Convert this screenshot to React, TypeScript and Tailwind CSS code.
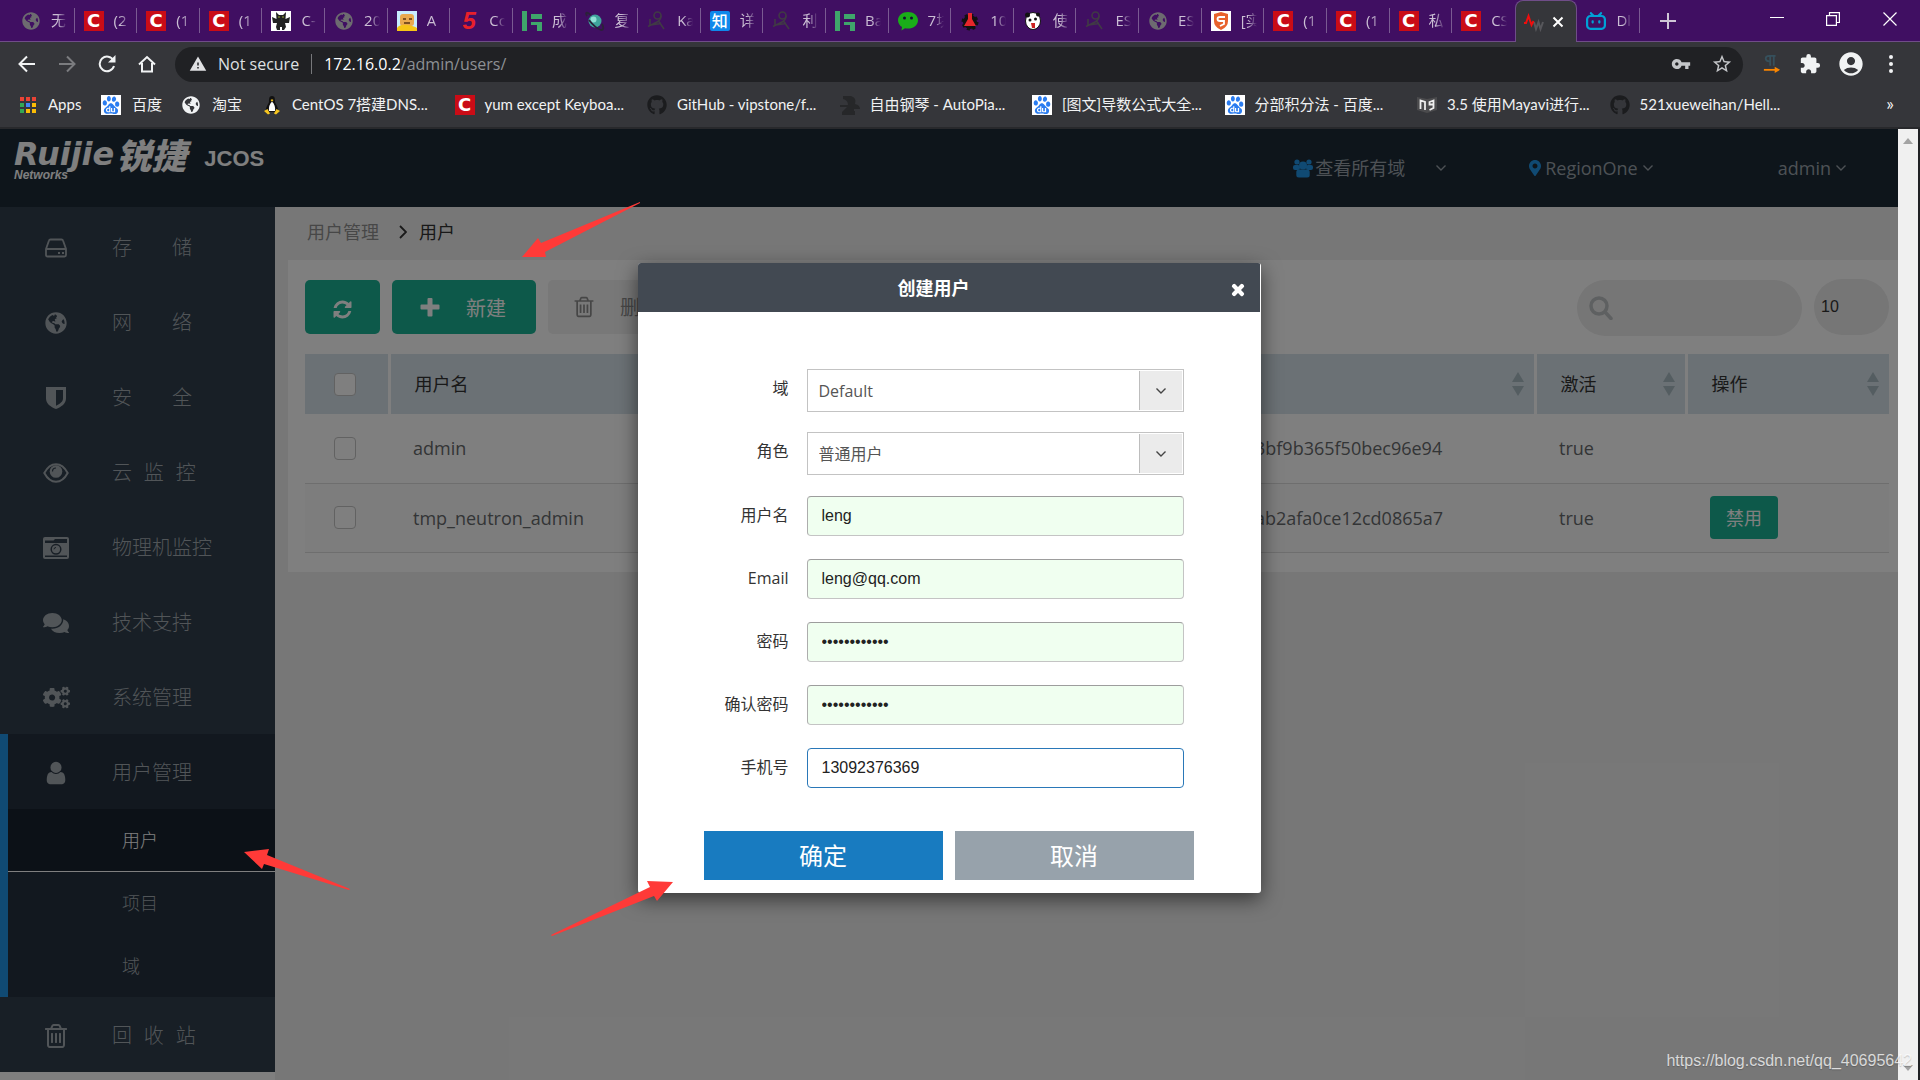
import type { ReactNode } from "react";
import { FaCogs, FaComments, FaGithub, FaGlobeAmericas, FaMapMarkerAlt, FaTimes } from "react-icons/fa";
import { MdAccountCircle, MdExtension, MdStarBorder, MdVpnKey, MdWarning } from "react-icons/md";
import { SiBaidu, SiBilibili } from "react-icons/si";

/* ---------- icons ---------- */

function Chevron({ className }: { className?: string }) {
  return (
    <svg viewBox="0 0 12 8" className={className} fill="none" stroke="currentColor" strokeWidth="1.4">
      <path d="M1.5 1.5 6 6l4.5-4.5" />
    </svg>
  );
}

function FaIcon({ d, className }: { d: string; className?: string }) {
  return (
    <svg viewBox="0 0 1792 1792" className={className} fill="currentColor">
      <path d={d} />
    </svg>
  );
}

const USER =
  "M1536 1399q0 109-62.5 187t-150.5 78h-854q-88 0-150.5-78t-62.5-187q0-85 8.5-160.5t31.5-152 58.5-131 94-89 134.5-34.5q131 128 313 128t313-128q76 0 134.5 34.5t94 89 58.5 131 31.5 152 8.5 160.5zm-256-887q0 159-112.5 271.5t-271.5 112.5-271.5-112.5-112.5-271.5 112.5-271.5 271.5-112.5 271.5 112.5 112.5 271.5z";
const TRASH =
  "M704 736v576q0 14-9 23t-23 9h-64q-14 0-23-9t-9-23v-576q0-14 9-23t23-9h64q14 0 23 9t9 23zm256 0v576q0 14-9 23t-23 9h-64q-14 0-23-9t-9-23v-576q0-14 9-23t23-9h64q14 0 23 9t9 23zm256 0v576q0 14-9 23t-23 9h-64q-14 0-23-9t-9-23v-576q0-14 9-23t23-9h64q14 0 23 9t9 23zm128 724v-948h-896v948q0 22 7 40.5t14.5 27 10.5 8.5h832q3 0 10.5-8.5t14.5-27 7-40.5zm-672-1076h448l-48-117q-7-9-17-11h-317q-10 2-17 11zm928 32v64q0 14-9 23t-23 9h-96v948q0 83-47 143.5t-113 60.5h-832q-66 0-113-58.5t-47-141.5v-952h-96q-14 0-23-9t-9-23v-64q0-14 9-23t23-9h309l70-167q15-37 54-63t79-26h320q40 0 79 26t54 63l70 167h309q14 0 23 9t9 23z";
const REFRESH =
  "M1639 1056q0 5-1 7-64 268-268 434.5t-478 166.5q-146 0-282.5-55t-243.5-157l-129 129q-19 19-45 19t-45-19-19-45v-448q0-26 19-45t45-19h448q26 0 45 19t19 45-19 45l-137 137q71 66 161 102t187 36q134 0 250-65t186-179q11-17 53-117 8-23 30-23h192q13 0 22.5 9.5t9.5 22.5zm25-800v448q0 26-19 45t-45 19h-448q-26 0-45-19t-19-45 19-45l138-138q-148-137-349-137-134 0-250 65t-186 179q-11 17-53 117-8 23-30 23h-199q-13 0-22.5-9.5t-9.5-22.5v-7q65-268 270-434.5t480-166.5q146 0 284 55.5t245 156.5l130-129q19-19 45-19t45 19 19 45z";

function PlusIcon() {
  return (
    <svg viewBox="0 0 20 20" className="size-5" fill="currentColor">
      <path d="M8.500 1H11.500Q12.500 1 12.500 2V7.500H18.500Q19.500 7.500 19.500 8.500V11.500Q19.500 12.500 18.500 12.500H12.500V18.500Q12.500 19.500 11.500 19.500H8.500Q7.500 19.500 7.500 18.500V12.500H1.500Q.5 12.500.5 11.500V8.500Q.5 7.500 1.500 7.500H7.500V2Q7.500 1 8.500 1Z" />
    </svg>
  );
}

function DiskIcon() {
  return (
    <svg viewBox="0 0 24 20" className="w-6" fill="none" stroke="currentColor" strokeWidth="1.8">
      <path d="M2 11 5 2.5Q5.300 1.500 6.500 1.500H17.500Q18.700 1.500 19 2.500L22 11V17Q22 18.500 20.500 18.500H3.500Q2 18.500 2 17ZM2 11H22" />
      <path d="M14 15h2M18 15h2" strokeWidth="2" />
    </svg>
  );
}

function ShieldIcon() {
  return (
    <svg viewBox="0 0 20 22" className="w-5" fill="currentColor">
      <path fillRule="evenodd" d="M0 0H20V11.500C20 16.500 15.500 20 10 22 4.500 20 0 16.500 0 11.500ZM10 3V18.700C14 17 17 14.500 17 11.500V3Z" />
    </svg>
  );
}

function EyeIcon() {
  return (
    <svg viewBox="0 0 26 20" className="w-[26px]">
      <path d="M1.300 10C4 5 8.300 1.300 13 1.300S22 5 24.700 10C22 15 17.700 18.700 13 18.700S4 15 1.300 10Z" fill="none" stroke="currentColor" strokeWidth="2" />
      <circle cx="13" cy="8.500" r="6.300" fill="currentColor" />
      <path d="M9.500 8.500Q9.500 5 13 5" fill="none" stroke="#303e4c" strokeWidth="1.200" />
    </svg>
  );
}

function CameraIcon() {
  return (
    <svg viewBox="0 0 26 22" className="w-[26px]">
      <path fill="currentColor" fillRule="evenodd" d="M2 0H24Q26 0 26 2V20Q26 22 24 22H2Q0 22 0 20V2Q0 0 2 0ZM2 3.500V6H24V2H12L10.500 3.500ZM2 18.500V20H24V18.500Z" />
      <circle cx="13" cy="12.300" r="4.800" fill="none" stroke="#303e4c" strokeWidth="1.500" />
      <path d="M11 12.300Q11 10.500 13 10.500" fill="none" stroke="#303e4c" />
    </svg>
  );
}

function UsersIcon() {
  return (
    <svg viewBox="0 0 20 19" className="w-5" fill="currentColor">
      <circle cx="4" cy="3" r="2.600" />
      <circle cx="16" cy="3" r="2.600" />
      <rect x="0" y="6" width="7" height="5" rx="2" />
      <rect x="13" y="6" width="7" height="5" rx="2" />
      <circle cx="10" cy="6.500" r="4" />
      <rect x="3.300" y="10.500" width="13.400" height="8" rx="2.500" />
    </svg>
  );
}

/* ---------- favicons ---------- */

function Csdn() {
  return (
    <span className="flex size-5 shrink-0 items-center justify-center bg-[#ca0c16] font-['DejaVu_Sans',sans-serif] text-lg leading-5 font-bold text-white">
      C
    </span>
  );
}

function Globe({ className = "text-[#6d6b70]" }: { className?: string }) {
  return <FaGlobeAmericas className={`size-[18px] shrink-0 ${className}`} />;
}

function Baidu() {
  return (
    <span className="flex size-5 shrink-0 items-center justify-center bg-white text-[#2a7cf0]">
      <SiBaidu className="size-[18px]" />
    </span>
  );
}

function Walker() {
  return (
    <svg viewBox="0 0 20 20" className="size-5 shrink-0" fill="none" stroke="#403a45" strokeWidth="1.600">
      <circle cx="10.500" cy="4.500" r="3.500" />
      <path d="M14 4.500Q14 9 10 11L1 15.500M11.500 10 17 18M3 8V14L14 12.500" />
    </svg>
  );
}

function Bars() {
  return (
    <svg viewBox="0 0 20 20" className="size-5 shrink-0" fill="#3fa66b">
      <path d="M0 0H5V20H0ZM9 3H20V8H9ZM9 11H20V20H15V14H9Z" />
    </svg>
  );
}

function Cat() {
  return (
    <svg viewBox="0 0 20 20" className="size-5 shrink-0">
      <rect width="20" height="20" fill="#fff" />
      <path d="M5 1 8 4H12L15 1 14.500 8 19 6 18 12H14L15 16 13 19H11V16H9V19H6L5 16 6 12H2L1 6 5.500 8Z" fill="#222" />
      <path d="M7 6H9M11 6H13" stroke="#9a3" />
    </svg>
  );
}

function Robot() {
  return (
    <svg viewBox="0 0 20 20" className="size-5 shrink-0">
      <rect width="20" height="20" fill="#c8ecff" />
      <rect x="3" y="3" width="14" height="12" rx="3" fill="#e9a94f" />
      <path d="M0 20V17Q3 13 10 14T20 17V20Z" fill="#f6c516" />
      <path d="M6 8H9M12 8H15M7 12H13" stroke="#5a3510" strokeWidth="1.500" />
    </svg>
  );
}

function Planet() {
  return (
    <svg viewBox="0 0 20 20" className="size-5 shrink-0">
      <circle cx="10" cy="10" r="6.500" fill="#3fa49c" />
      <circle cx="8.500" cy="8.500" r="3" fill="#8ee0d4" />
      <path d="M6 4Q-1-1 2 5M4 9Q10 17 16 19 20 19 17 13" fill="none" stroke="#2a2238" strokeWidth="1.800" />
    </svg>
  );
}

function Wechat() {
  return (
    <svg viewBox="0 0 20 20" className="size-5 shrink-0">
      <path d="M10 1C4.500 1 0 4.500 0 9.300 0 12 1.500 14.500 4 16L3.500 19.500 7 17.300C14 18.700 20 15 20 9.300 20 4.500 15.500 1 10 1Z" fill="#1aad19" />
      <circle cx="6.500" cy="7" r="1.500" fill="#113" />
      <circle cx="13.500" cy="7" r="1.500" fill="#113" />
    </svg>
  );
}

function Gear() {
  return (
    <svg viewBox="0 0 20 20" className="size-5 shrink-0">
      <circle cx="10" cy="11" r="7" fill="#111" stroke="#111" strokeWidth="3" strokeDasharray="3 2.500" />
      <path d="M8 2H12V8L16 15H4L8 8Z" fill="#e5262b" />
    </svg>
  );
}

function Panda() {
  return (
    <svg viewBox="0 0 20 20" className="size-5 shrink-0">
      <ellipse cx="10" cy="10" rx="7.500" ry="8.500" fill="#fff" stroke="#111" />
      <circle cx="4.500" cy="4" r="2.500" fill="#111" />
      <circle cx="15" cy="3.500" r="2" fill="#111" />
      <circle cx="7" cy="9" r="1.500" fill="#111" />
      <circle cx="12.500" cy="8" r="1.500" fill="#111" />
      <path d="M8 12H12V17H9Z" fill="#c22" />
    </svg>
  );
}

function Guard() {
  return (
    <svg viewBox="0 0 20 20" className="size-5 shrink-0">
      <rect width="20" height="20" fill="#fff" />
      <path d="M3 3 10 1 17 3V10Q17 16 10 19 3 16 3 10Z" fill="#e8622c" />
      <path d="M14 6H9Q6.500 6 6.500 8T9 10H13V13L9 15" fill="none" stroke="#fff" strokeWidth="1.800" />
    </svg>
  );
}

function Pulse() {
  return (
    <svg viewBox="0 0 20 20" className="size-5 shrink-0" fill="none" strokeWidth="2">
      <path d="M10 10 12 17 14.500 10 16.500 17 19 10" stroke="#57575b" />
      <path d="M0 11H2L4.500 4 7.500 13 9.500 9" stroke="#f00d0d" />
    </svg>
  );
}

function Tux() {
  return (
    <svg viewBox="0 0 20 20" className="size-5 shrink-0">
      <path d="M10 1C7 1 7 4 7 6.500S3 12 4 17H16C17 12 13 9 13 6.500S13 1 10 1Z" fill="#111" />
      <path d="M10 6.500C7.500 9 6.500 12 7 16H13C13.500 12 12.500 9 10 6.500Z" fill="#fff" />
      <path d="M8.500 5 10 4.300 11.500 5 10 6.800ZM2 16 5.500 14 8 18.500 6 19.500ZM18 16 14.500 14 12 18.500 14 19.500Z" fill="#f7c51e" />
    </svg>
  );
}

function Piano() {
  return (
    <svg viewBox="0 0 20 20" className="size-5 shrink-0" fill="#262729">
      <path d="M3 1H11Q17 3 15 9 20 10 20 14H14V16H15V20H2V17L7 12H0V10H8Q8 5 3 4Z" />
    </svg>
  );
}

function Book() {
  return (
    <svg viewBox="0 0 20 20" className="size-5 shrink-0">
      <path d="M0 2 10 4 20 2V15L10 18 0 15Z" fill="#4b4b4d" />
      <path d="M3.500 14V5.500L8 7V15M16.500 9.500H12.500V7L16.500 5.500V13L12.500 15" fill="none" stroke="#eee" strokeWidth="1.800" />
    </svg>
  );
}

function Five() {
  return (
    <span className="w-5 shrink-0 text-center font-['Liberation_Sans',sans-serif] text-2xl leading-5 font-bold text-[#e8202a] italic">
      5
    </span>
  );
}

function Zhihu() {
  return (
    <span className="flex size-5 shrink-0 items-center justify-center rounded-xs bg-[#0f88eb] text-base leading-5 font-medium text-white">
      知
    </span>
  );
}

/* ---------- browser chrome ---------- */

const tabs: { icon: ReactNode; title: string; active?: boolean }[] = [
  { icon: <Globe />, title: "无" },
  { icon: <Csdn />, title: "(2" },
  { icon: <Csdn />, title: "(1" },
  { icon: <Csdn />, title: "(1" },
  { icon: <Cat />, title: "C-" },
  { icon: <Globe />, title: "20" },
  { icon: <Robot />, title: "A" },
  { icon: <Five />, title: "Co" },
  { icon: <Bars />, title: "成" },
  { icon: <Planet />, title: "复" },
  { icon: <Walker />, title: "Ka" },
  { icon: <Zhihu />, title: "详" },
  { icon: <Walker />, title: "利" },
  { icon: <Bars />, title: "Ba" },
  { icon: <Wechat />, title: "7块" },
  { icon: <Gear />, title: "10" },
  { icon: <Panda />, title: "使" },
  { icon: <Walker />, title: "ES" },
  { icon: <Globe />, title: "ES" },
  { icon: <Guard />, title: "[实" },
  { icon: <Csdn />, title: "(1" },
  { icon: <Csdn />, title: "(1" },
  { icon: <Csdn />, title: "私" },
  { icon: <Csdn />, title: "CS" },
  { icon: <Pulse />, title: "", active: true },
  { icon: <SiBilibili className="size-5 shrink-0 text-[#00a1d6]" />, title: "Dl" },
];

function TabStrip() {
  return (
    <div className="flex h-[42px] shrink-0 border-b border-[#6f4d88] bg-[#400f62] pl-3">
      <div className="grid min-w-0 flex-1 auto-cols-fr grid-flow-col">
        {tabs.map((tab, i) =>
          tab.active ? (
            <div key={i} className="-mb-px flex items-center gap-2 rounded-t-lg border border-b-0 border-[#6f4d88] bg-[#35363a] pl-2">
              {tab.icon}
              <button type="button" aria-label="Close tab" className="text-white">
                <svg viewBox="0 0 12 12" className="size-3" stroke="currentColor" strokeWidth="2">
                  <path d="M1.500 1.500 10.500 10.500M10.500 1.500 1.500 10.500" />
                </svg>
              </button>
            </div>
          ) : (
            <div key={i} className="flex min-w-0 items-center">
              <div className="flex min-w-0 flex-1 items-center gap-2.5 pl-[9px]">
                <span className="flex w-5 shrink-0 justify-center">{tab.icon}</span>
                <span className="w-4 overflow-hidden mask-r-from-40% text-[15px] whitespace-nowrap text-[#cbbfd4]">
                  {tab.title}
                </span>
              </div>
              {tabs[i + 1]?.active ? null : <span className="h-[25px] w-px bg-[#7a5a92]" />}
            </div>
          ),
        )}
      </div>
      <div className="flex w-[280px] shrink-0 items-center text-white">
        <button type="button" aria-label="New tab" className="ml-5 text-[#cfc6d6]">
          <svg viewBox="0 0 16 16" className="size-4" stroke="currentColor" strokeWidth="2">
            <path d="M8 0V16M0 8H16" />
          </svg>
        </button>
        <button type="button" aria-label="Minimize" className="mb-2 ml-[94px]">
          <svg viewBox="0 0 14 14" className="size-3.5" stroke="currentColor">
            <path d="M0 7.500H14" />
          </svg>
        </button>
        <button type="button" aria-label="Restore" className="mb-1 ml-[42px]">
          <svg viewBox="0 0 14 14" className="size-3.5" fill="none" stroke="currentColor" strokeWidth="1.200">
            <path d="M.6 3.600H10.400V13.400H.6ZM3.500 3.500V.6H13.400V10.500H10.500" />
          </svg>
        </button>
        <button type="button" aria-label="Close" className="mb-1 ml-[43px]">
          <svg viewBox="0 0 14 14" className="size-3.5" stroke="currentColor" strokeWidth="1.200">
            <path d="M.5.5 13.500 13.500M13.500.5.5 13.500" />
          </svg>
        </button>
      </div>
    </div>
  );
}

function AddressBar() {
  return (
    <div className="flex h-11 shrink-0 items-center text-[#f1f3f4]">
      <button type="button" aria-label="Back" className="ml-[18px]">
        <svg viewBox="0 0 18 18" className="size-[18px]" fill="none" stroke="currentColor" strokeWidth="2">
          <path d="M17 9H2M9 1.500 1.500 9 9 16.500" />
        </svg>
      </button>
      <button type="button" aria-label="Forward" className="ml-[22px] text-[#7b7c7f]">
        <svg viewBox="0 0 18 18" className="size-[18px]" fill="none" stroke="currentColor" strokeWidth="2">
          <path d="M1 9H16M9 1.500 16.500 9 9 16.500" />
        </svg>
      </button>
      <button type="button" aria-label="Reload" className="ml-[22px]">
        <svg viewBox="0 0 18 18" className="size-[18px]" fill="none" stroke="currentColor" strokeWidth="2">
          <path d="M15.500 5.500A7.300 7.300 0 1 0 16 11" />
          <path d="M17.500 0V7.500H10Z" fill="currentColor" stroke="none" />
        </svg>
      </button>
      <button type="button" aria-label="Home" className="ml-[22px]">
        <svg viewBox="0 0 18 18" className="size-[18px]" fill="none" stroke="currentColor" strokeWidth="2">
          <path d="M1 9.500 9 2 17 9.500M4 8V16.500H14V8" />
        </svg>
      </button>
      <div className="ml-[19px] flex h-[35px] min-w-0 flex-1 items-center rounded-full bg-[#202124] pr-2.5 pl-3.5 text-base">
        <MdWarning className="size-[18px] text-[#e0e1e3]" />
        <span className="ml-[11px] text-[#dfe0e2]">Not secure</span>
        <span className="mx-3 h-5 w-px bg-[#77787b]" />
        <span className="text-white">172.16.0.2</span>
        <span className="text-[#8d9094]">/admin/users/</span>
        <MdVpnKey className="ml-auto size-5 text-[#c4c6c9]" />
        <MdStarBorder className="ml-5 size-[22px] text-[#c4c6c9]" />
      </div>
      <svg viewBox="0 0 18 20" className="ml-5 size-[18px]" fill="none">
        <path d="M7 1V12M11 1V12M13 1H6Q2 1 2 4T6 7" stroke="#36505c" strokeWidth="2" />
        <path d="M0 16.500H13" stroke="#f98500" strokeWidth="2" />
        <path d="M12 13 18 16.500 12 20Z" fill="#f98500" />
      </svg>
      <MdExtension className="ml-[18px] size-[22px]" />
      <MdAccountCircle className="ml-4 size-7" />
      <svg viewBox="0 0 4 18" className="mr-[27px] ml-6 h-[18px] w-1" fill="currentColor">
        <circle cx="2" cy="2" r="2" />
        <circle cx="2" cy="9" r="2" />
        <circle cx="2" cy="16" r="2" />
      </svg>
    </div>
  );
}

const bookmarks = [
  { icon: <Tux />, title: "CentOS 7搭建DNS..." },
  { icon: <Csdn />, title: "yum except Keyboa..." },
  { icon: <FaGithub className="size-5 shrink-0 text-[#1b1c1e]" />, title: "GitHub - vipstone/f..." },
  { icon: <Piano />, title: "自由钢琴 - AutoPia..." },
  { icon: <Baidu />, title: "[图文]导数公式大全..." },
  { icon: <Baidu />, title: "分部积分法 - 百度..." },
  { icon: <Book />, title: "3.5 使用Mayavi进行..." },
  { icon: <FaGithub className="size-5 shrink-0 text-[#1b1c1e]" />, title: "521xueweihan/Hell..." },
];

const dots = [
  "bg-[#ea4335]", "bg-[#ea4335]", "bg-[#ea4335]",
  "bg-[#34a853]", "bg-[#4285f4]", "bg-[#fbbc05]",
  "bg-[#34a853]", "bg-[#fbbc05]", "bg-[#fbbc05]",
];

function BookmarkBar() {
  return (
    <nav className="flex h-[43px] shrink-0 items-center border-b-2 border-[#28292c] pb-1 pl-5 font-['Lato','Noto_Sans_CJK_SC',sans-serif] text-[15px] whitespace-nowrap text-[#f1f2f3]">
      <a href="#apps" className="flex w-[81px] shrink-0 items-center gap-3">
        <span className="grid grid-cols-3 gap-0.5">
          {dots.map((c, i) => (
            <span key={i} className={`size-1 ${c}`} />
          ))}
        </span>
        Apps
      </a>
      <a href="#baidu" className="flex w-[81px] shrink-0 items-center gap-[11px]">
        <Baidu />
        百度
      </a>
      <a href="#taobao" className="flex w-20 shrink-0 items-center gap-3">
        <Globe className="text-[#f1f3f4]" />
        淘宝
      </a>
      <div className="grid min-w-0 flex-1 grid-cols-8">
        {bookmarks.map((b) => (
          <a key={b.title} href="#bookmark" className="flex items-center gap-2.5">
            {b.icon}
            {b.title}
          </a>
        ))}
      </div>
      <button type="button" className="w-[118px] shrink-0 pr-[26px] pb-1 text-right text-lg">
        »
      </button>
    </nav>
  );
}

/* ---------- admin page ---------- */

function TopBar() {
  return (
    <header className="flex h-[78px] shrink-0 items-start bg-[#1c2a36] pl-3.5 text-lg text-[#9aa3ab]">
      <a href="#home" className="flex pt-3 text-white">
        <span className="flex flex-col">
          <span className="flex h-[26px] items-center gap-0.5 leading-[26px] font-bold italic">
            <span className="font-['DejaVu_Sans',sans-serif] text-[32px]">Ruijie</span>
            <span className="font-['Noto_Sans_CJK_SC',sans-serif] text-[35px] font-black">锐捷</span>
          </span>
          <span className="pt-0.5 font-['Liberation_Sans',sans-serif] text-xs leading-3 font-bold italic">Networks</span>
        </span>
        <span className="ml-[18px] pt-1.5 font-['Liberation_Sans',sans-serif] text-[22px] leading-6 font-bold">JCOS</span>
      </a>
      <div className="ml-auto flex h-[78px] items-center">
        <button type="button" className="flex items-center gap-0.5">
          <span className="text-[#2094e6]">
            <UsersIcon />
          </span>
          查看所有域
          <Chevron className="ml-7 w-3" />
        </button>
        <button type="button" className="ml-20 flex items-center">
          <FaMapMarkerAlt className="mr-0.5 size-4 text-[#2094e6]" />
          RegionOne
          <Chevron className="ml-1 w-3" />
        </button>
        <button type="button" className="mr-[51px] ml-[124px] flex items-center gap-1">
          admin
          <Chevron className="w-3" />
        </button>
      </div>
    </header>
  );
}

const menu = [
  { icon: <DiskIcon />, label: "存\u3000\u3000储" },
  { icon: <FaGlobeAmericas className="size-[22px]" />, label: "网\u3000\u3000络" },
  { icon: <ShieldIcon />, label: "安\u3000\u3000全" },
  { icon: <EyeIcon />, label: "云\u2004\u00a0监\u2004\u00a0控" },
  { icon: <CameraIcon />, label: "物理机监控" },
  { icon: <FaComments className="size-[26px]" />, label: "技术支持" },
  { icon: <FaCogs className="size-[27px]" />, label: "系统管理" },
];

function MenuItem({ icon, label }: { icon: ReactNode; label: string }) {
  return (
    <a href="#menu" className="flex h-[75px] items-center pt-0.5 text-xl">
      <span className="flex w-28 justify-center">{icon}</span>
      {label}
    </a>
  );
}

function Sidebar() {
  return (
    <aside className="w-[275px] shrink-0 bg-white pb-2 font-light text-[#a3aab0]">
      <nav className="bg-[#303e4c] pt-0.5">
        {menu.map((m) => (
          <MenuItem key={m.label} icon={m.icon} label={m.label} />
        ))}
        <div className="border-l-8 border-[#2094e6] bg-[#24303e] text-lg">
          <a href="#user-admin" className="flex h-[75px] items-center pt-0.5 text-xl">
            <span className="flex w-[104px] justify-center pr-2">
              <FaIcon d={USER} className="size-[26px]" />
            </span>
            用户管理
          </a>
          <a href="#users" className="flex h-[63px] items-center border-b border-white bg-[#18222e] pl-[114px] text-white">
            用户
          </a>
          <a href="#projects" className="flex h-[62px] items-center pl-[114px]">项目</a>
          <a href="#domains" className="flex h-[63px] items-center pl-[114px]">域</a>
        </div>
        <MenuItem icon={<FaIcon d={TRASH} className="size-7" />} label={"回\u2004\u00a0收\u2004\u00a0站"} />
      </nav>
    </aside>
  );
}

function SortIcon() {
  return (
    <svg viewBox="0 0 12 24" className="ml-auto h-6 w-3" fill="#a9bbc2">
      <path d="M6 0 12 10H0ZM6 24 12 14H0Z" />
    </svg>
  );
}

function CheckBox({ label }: { label: string }) {
  return (
    <input
      type="checkbox"
      aria-label={label}
      className="ml-[29px] block h-[23px] w-[22px] appearance-none rounded border border-[#c4c4c4] bg-white"
    />
  );
}

const columns = [
  { label: "用户名", width: "w-[416px]" },
  { label: "", width: "w-[426px]" },
  { label: "", width: "" },
  { label: "激活", width: "w-[151px]" },
  { label: "操作", width: "w-[203px]" },
];

const users = [
  { name: "admin", id: "3bf9b365f50bec96e94", active: "true" },
  { name: "tmp_neutron_admin", id: "ab2afa0ce12cd0865a7", active: "true", action: "禁用" },
];

function UserTable() {
  return (
    <table className="mt-5 w-full table-fixed border-collapse text-left text-lg text-[#676a6c]">
      <thead>
        <tr className="h-[60px] bg-[#d6e2ea] text-[#333]">
          <th className="w-[84px] border-r-3 border-white">
            <CheckBox label="全选" />
          </th>
          {columns.map((c, i) => (
            <th
              key={i}
              className={`${c.width} border-r-3 border-white pr-2.5 pl-6 font-normal last:border-r-0`}
            >
              <div className="flex items-center">
                {c.label}
                <SortIcon />
              </div>
            </th>
          ))}
        </tr>
      </thead>
      <tbody>
        {users.map((u) => (
          <tr key={u.name} className="h-[69px] border-b border-[#dddddd] even:bg-[#fbfbfb]">
            <td>
              <CheckBox label={u.name} />
            </td>
            <td className="pl-6">{u.name}</td>
            <td />
            <td className="pl-6">{u.id}</td>
            <td className="pl-6">{u.active}</td>
            <td className="pl-6">
              {u.action ? (
                <button type="button" className="h-[43px] w-[68px] rounded bg-[#1ab394] text-white">
                  {u.action}
                </button>
              ) : null}
            </td>
          </tr>
        ))}
      </tbody>
    </table>
  );
}

function UsersPage() {
  return (
    <main className="min-w-0 flex-1 bg-[#efefef] pl-[13px]">
      <div className="flex h-[53px] items-center pb-1 pl-[19px] text-lg">
        <a href="#user-admin" className="text-[#8f8f8f]">用户管理</a>
        <svg viewBox="0 0 8 14" className="mr-3 ml-5 h-3.5 w-2" fill="none" stroke="#333" strokeWidth="1.800">
          <path d="M1 1 7 7 1 13" />
        </svg>
        <span className="text-[#333]">用户</span>
      </div>
      <section className="bg-white pt-5 pr-[9px] pb-[19px] pl-[17px]">
        <div className="flex h-[54px] gap-3 text-xl text-white">
          <button type="button" aria-label="刷新" className="flex w-[75px] items-center justify-center rounded-[5px] bg-[#1ab394] pt-1">
            <FaIcon d={REFRESH} className="size-[21px]" />
          </button>
          <button type="button" className="flex w-36 items-center rounded-[5px] bg-[#1ab394] pl-7">
            <PlusIcon />
            <span className="ml-[26px] pt-1">新建</span>
          </button>
          <button type="button" className="flex w-36 items-center rounded-[5px] bg-[#f0f0f0] pl-6 text-[#8d8d8d]">
            <FaIcon d={TRASH} className="size-6" />
            <span className="ml-6 pt-0.5">删除</span>
          </button>
          <label className="ml-auto flex h-14 w-[225px] items-center rounded-full bg-[#ececec] pl-3">
            <svg viewBox="0 0 24 24" className="size-6 shrink-0" fill="none" stroke="#bdc0c2" strokeWidth="3.500">
              <circle cx="10" cy="10" r="8" />
              <path d="M16 16 22 22.500" strokeLinecap="round" />
            </svg>
            <input type="search" aria-label="搜索" className="min-w-0 flex-1 bg-transparent text-base text-[#333] outline-none" />
          </label>
          <select aria-label="每页条数" className="-mt-px h-14 w-[75px] appearance-none rounded-[28px] bg-[#ececec] pl-[7px] font-['Liberation_Sans',sans-serif] text-base text-[#333]">
            <option>10</option>
          </select>
        </div>
        <UserTable />
      </section>
    </main>
  );
}

/* ---------- dialog ---------- */

function SelectRow({ id, label, value }: { id: string; label: string; value: string }) {
  return (
    <div className="flex h-[43px] items-center">
      <label htmlFor={id} className="w-[150px] pr-[18px] pb-1.5 text-right">{label}</label>
      <div className="relative h-full flex-1 border border-[#c3c3c3]">
        <select id={id} className="h-full w-full appearance-none bg-white pl-[11px] text-[#555] outline-none">
          <option>{value}</option>
        </select>
        <span className="pointer-events-none absolute inset-y-px right-px flex w-[43px] items-center justify-center border-l border-[#bdbdbd] bg-[#ebebeb] text-[#444]">
          <Chevron className="w-3" />
        </span>
      </div>
    </div>
  );
}

type InputRowProps = { id: string; label: string; value: string; type?: string; focused?: boolean };

function InputRow({ id, label, value, type = "text", focused }: InputRowProps) {
  return (
    <div className="flex h-10 items-center">
      <label htmlFor={id} className="w-[150px] pr-[18px] pb-0.5 text-right">{label}</label>
      <input
        id={id}
        type={type}
        defaultValue={value}
        className={`h-full min-w-0 flex-1 rounded border pl-3.5 font-['Liberation_Sans',sans-serif] text-base text-[#222] outline-none ${
          focused ? "border-[#2a78b8] bg-white" : "border-[#c4c4c4] border-t-[#9d9d9d] border-l-[#adadad] bg-[#f0fff0]"
        }`}
      />
    </div>
  );
}

function CreateUserDialog() {
  return (
    <div role="dialog" aria-labelledby="dialog-title" className="w-[623px] overflow-hidden rounded-[3px] bg-white shadow-[0_6px_20px_rgba(0,0,0,0.55)]">
      <div className="mr-px flex h-[49px] items-center bg-[#424952] text-white">
        <h2 id="dialog-title" className="flex-1 text-center text-lg leading-6 font-bold">创建用户</h2>
        <button type="button" aria-label="关闭" className="mt-1 mr-3.5">
          <FaTimes className="size-4" stroke="currentColor" strokeWidth="40" />
        </button>
      </div>
      <form className="pb-[13px] text-base text-[#333]">
        <div className="mr-[77px] ml-[19px] flex flex-col pt-[57px]">
          <div className="flex flex-col gap-5">
            <SelectRow id="domain" label="域" value="Default" />
            <SelectRow id="role" label="角色" value="普通用户" />
          </div>
          <div className="mt-[21px] flex flex-col gap-[23px]">
            <InputRow id="username" label="用户名" value="leng" />
            <InputRow id="email" label="Email" value="leng@qq.com" />
            <InputRow id="password" label="密码" value="abcdefabcdef" type="password" />
            <InputRow id="confirm" label="确认密码" value="abcdefabcdef" type="password" />
            <InputRow id="phone" label="手机号" value="13092376369" focused />
          </div>
        </div>
        <div className="mt-[43px] flex gap-3 pr-[67px] pl-[66px] text-2xl text-white">
          <button type="submit" className="h-[49px] flex-1 bg-[#187bc0]">确定</button>
          <button type="button" className="h-[49px] flex-1 bg-[#97a2ab]">取消</button>
        </div>
      </form>
    </div>
  );
}

function Scrollbar() {
  return (
    <div className="flex w-[22px] shrink-0 flex-col justify-between border-r-2 border-[#202124] bg-[#f0f0f0] py-[9px] text-[#a3a3a3]">
      <svg viewBox="0 0 10 6" className="mx-auto w-2.5" fill="currentColor">
        <path d="M5 0 10 6H0Z" />
      </svg>
      <svg viewBox="0 0 10 6" className="mx-auto w-2.5" fill="currentColor">
        <path d="M0 0H10L5 6Z" />
      </svg>
    </div>
  );
}

// hand-drawn pointers laid over the whole window
function Arrows() {
  return (
    <svg viewBox="0 0 1920 1080" className="pointer-events-none absolute top-0 left-0 h-[1080px] w-[1920px]" fill="#ff3a38">
      <path d="M522 257 538 238 541 243 640 202 640 203 545 252 546 257Z" />
      <path d="M244 852 269 849 267 855 350 889 349 890 264 864 262 869Z" />
      <path d="M673 882 647 881 650 887 551 935 552 936 654 896 657 901Z" />
    </svg>
  );
}

export default function App() {
  return (
    <div className="relative flex h-screen flex-col overflow-hidden bg-[#35363a] font-['Open_Sans','Noto_Sans_CJK_SC',sans-serif]">
      <TabStrip />
      <AddressBar />
      <BookmarkBar />
      <div className="flex min-h-0 flex-1">
        <div className="relative flex min-w-0 flex-1 flex-col">
          <TopBar />
          <div className="flex min-h-0 flex-1">
            <Sidebar />
            <UsersPage />
          </div>
          <div className="absolute inset-0 flex items-start justify-center bg-black/50 pt-[134px]">
            <CreateUserDialog />
          </div>
        </div>
        <Scrollbar />
      </div>
      <Arrows />
      <p className="pointer-events-none absolute right-2 bottom-[7px] font-['Liberation_Sans',sans-serif] text-base text-white/75 text-shadow-xs">
        https://blog.csdn.net/qq_40695642
      </p>
    </div>
  );
}
